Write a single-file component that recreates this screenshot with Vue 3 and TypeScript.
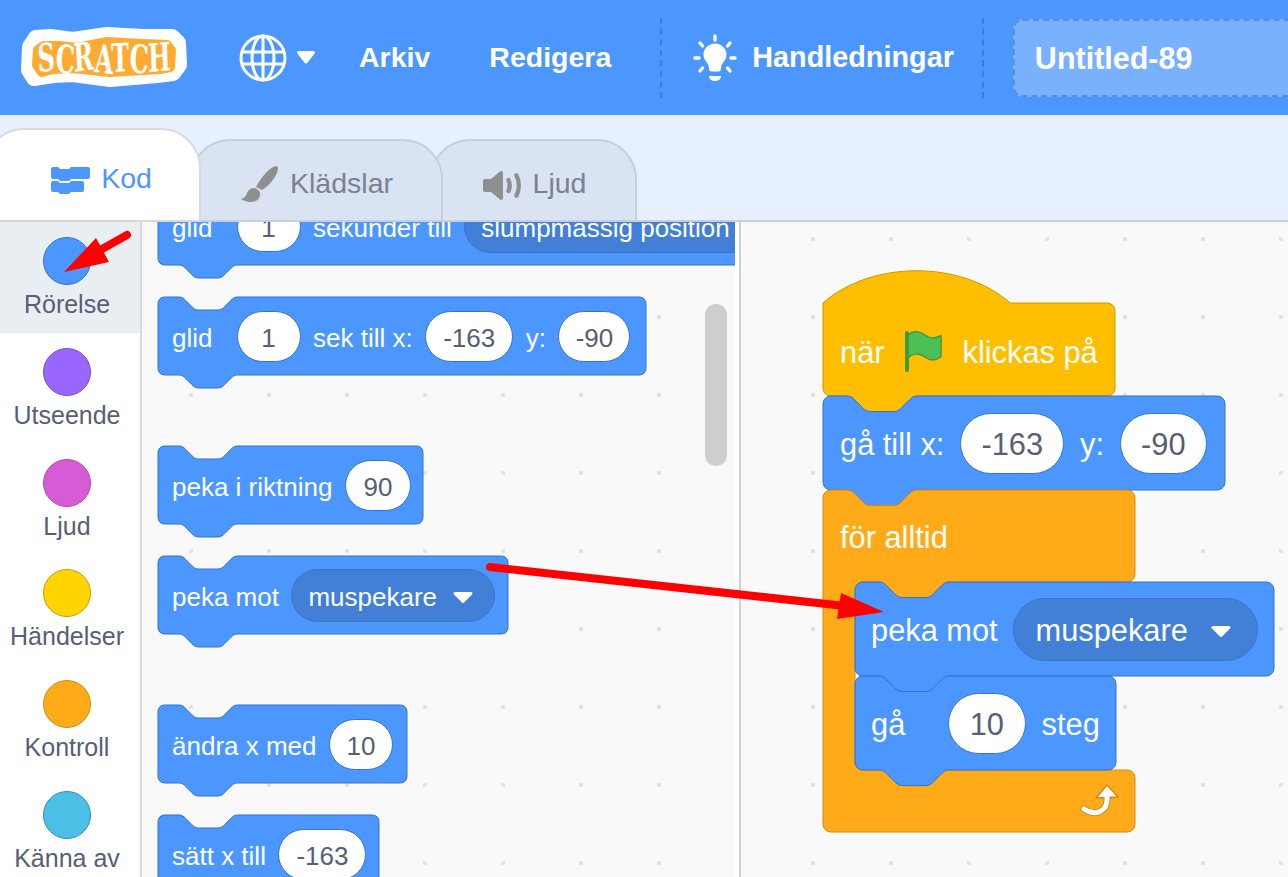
<script setup lang="ts">
type Part =
  | { kind: 'text'; label: string; width?: number }
  | { kind: 'num'; value: string; width: number }
  | { kind: 'menu'; label: string; width: number }
  | { kind: 'flag' }
  | { kind: 'loop' }

interface Block {
  shape: 'stack' | 'hat' | 'loop' | 'foot'
  width: number
  height: number
  gap?: number
  indent?: number
  parts: Part[]
}

interface Area {
  name: string
  scale: number
  notchAt: number
  blocks: Block[]
}

const text = (label: string, width?: number): Part => ({ kind: 'text', label, width })
const num = (value: string, width: number): Part => ({ kind: 'num', value, width })
const menu = (label: string, width: number): Part => ({ kind: 'menu', label, width })

const categories = [
  { label: 'Rörelse', fill: '#4c97ff', line: '#3373cc' },
  { label: 'Utseende', fill: '#9966ff', line: '#774dcb' },
  { label: 'Ljud', fill: '#d65cd6', line: '#bd42bd' },
  { label: 'Händelser', fill: '#ffd500', line: '#cc9900' },
  { label: 'Kontroll', fill: '#ffab19', line: '#cf8b17' },
  { label: 'Känna av', fill: '#4cbfe6', line: '#2e8eb8' },
]

const areas: Area[] = [
  {
    name: 'palette',
    scale: 1.625,
    notchAt: 21,
    blocks: [
      {
        shape: 'stack', width: 800, height: 78, gap: -35,
        parts: [text('glid', 52), num('1', 64), text('sekunder till'), menu('slumpmässig position', 320)],
      },
      {
        shape: 'stack', width: 488, height: 78, gap: 32,
        parts: [text('glid', 52), num('1', 64), text('sek till x:'), num('-163', 88), text('y:'), num('-90', 72)],
      },
      { shape: 'stack', width: 265, height: 78, gap: 71, parts: [text('peka i riktning'), num('90', 66)] },
      { shape: 'stack', width: 350, height: 78, gap: 32, parts: [text('peka mot'), menu('muspekare', 204)] },
      { shape: 'stack', width: 249, height: 78, gap: 71, parts: [text('ändra x med'), num('10', 64)] },
      { shape: 'stack', width: 221, height: 78, gap: 32, parts: [text('sätt x till'), num('-163', 88)] },
    ],
  },
  {
    name: 'workspace',
    scale: 1.95,
    notchAt: 24,
    blocks: [
      { shape: 'hat', width: 292, height: 126, parts: [text('när'), { kind: 'flag' }, text('klickas på')] },
      { shape: 'stack', width: 402, height: 94, parts: [text('gå till x:'), num('-163', 104), text('y:'), num('-90', 87)] },
      { shape: 'loop', width: 312, height: 92, parts: [text('för alltid')] },
      { shape: 'stack', width: 419, height: 94, indent: 32, parts: [text('peka mot'), menu('muspekare', 245)] },
      { shape: 'stack', width: 261, height: 94, indent: 32, parts: [text('gå', 61), num('10', 78), text('steg')] },
      { shape: 'foot', width: 312, height: 62, parts: [{ kind: 'loop' }] },
    ],
  },
]

function notchRight(s: number): string {
  return `c${2 * s},0 ${3 * s},${s} ${4 * s},${2 * s} l${4 * s},${4 * s} c${s},${s} ${2 * s},${2 * s} ${4 * s},${2 * s} h${12 * s} c${2 * s},0 ${3 * s},${-s} ${4 * s},${-2 * s} l${4 * s},${-4 * s} c${s},${-s} ${2 * s},${-2 * s} ${4 * s},${-2 * s}`
}

function notchLeft(s: number): string {
  return `c${-2 * s},0 ${-3 * s},${s} ${-4 * s},${2 * s} l${-4 * s},${4 * s} c${-s},${s} ${-2 * s},${2 * s} ${-4 * s},${2 * s} h${-12 * s} c${-2 * s},0 ${-3 * s},${-s} ${-4 * s},${-2 * s} l${-4 * s},${-4 * s} c${-s},${-s} ${-2 * s},${-2 * s} ${-4 * s},${-2 * s}`
}

// Block outlines follow the Scratch notch; they are drawn behind the fields.
function blockPath(block: Block, area: Area): string {
  const s = area.scale
  const r = 4 * s
  const a = area.notchAt
  const w = block.width
  const h = block.height
  const arc = (x: number, y: number, sweep = 1) => `A${r},${r} 0 0 ${sweep} ${x},${y}`
  const bottom = `V${h - r} ${arc(w - r, h)} H${a + 36 * s} ${notchLeft(s)} H${r} ${arc(0, h - r)} Z`

  if (block.shape === 'hat') {
    const top = 33
    return `M0,${top} c${25 * s},-43 ${71 * s},-43 ${96 * s},0 H${w - r} ${arc(w, top + r)} ${bottom}`
  }
  if (block.shape === 'loop') {
    const inner = 32
    const innerEnd = h + 94 + 94
    const end = innerEnd + 62
    return `M0,${r} ${arc(r, 0)} H${a} ${notchRight(s)} H${w - r} ${arc(w, r)} V${h - r} ${arc(w - r, h)} H${inner + a + 36 * s} ${notchLeft(s)} H${inner + r} ${arc(inner, h + r, 0)} V${innerEnd - r} ${arc(inner + r, innerEnd, 0)} H${w - r} ${arc(w, innerEnd + r)} V${end - r} ${arc(w - r, end)} H${r} ${arc(0, end - r)} Z`
  }
  return `M0,${r} ${arc(r, 0)} H${a} ${notchRight(s)} H${w - r} ${arc(w, r)} ${bottom}`
}

function blockTone(block: Block): string {
  if (block.shape === 'hat') return 'tone-event'
  if (block.shape === 'loop') return 'tone-control'
  return 'tone-motion'
}
</script>

<template>
  <div class="editor">
    <header class="menu-bar">
      <svg class="logo" viewBox="0 0 190 85" aria-label="Scratch">
        <path
          d="M20 32 26 23 40 22 63 25 97 20 133 22 162 22 168 28 169 50 163 58 147 60 100 64 63 59 43 60 24 63 19 55z"
          fill="#fff"
          stroke="#fff"
          stroke-width="16"
          stroke-linejoin="round"
        />
        <path
          d="M28 35 34 31 50 31 67 33 97 27 133 29 157 30 161 35 160 52 150 54 100 57 63 53 43 54 32 57 27 50z"
          fill="#ffab33"
          stroke="#ffab33"
          stroke-width="10"
          stroke-linejoin="round"
        />
        <text
          x="28"
          y="57"
          fill="#fff"
          textLength="133"
          lengthAdjust="spacingAndGlyphs"
          rotate="-3 4 -5 4 -2 3 -3"
        >SCRATCH</text>
      </svg>

      <svg class="globe" viewBox="0 0 48 48" fill="none" stroke="#fff" stroke-width="3">
        <circle cx="24" cy="24" r="22" />
        <ellipse cx="24" cy="24" rx="11" ry="22" />
        <path d="M24 2v44M3.500 18h41M3.500 30h41" />
      </svg>
      <svg class="globe-caret" viewBox="0 0 20 13">
        <path d="M2.500 1.500h15L10 11z" fill="#fff" stroke="#fff" stroke-width="3" stroke-linejoin="round" />
      </svg>

      <span class="menu-item first">Arkiv</span>
      <span class="menu-item second">Redigera</span>
      <span class="divider first-divider"></span>

      <svg class="bulb" viewBox="0 0 44 48" aria-hidden="true">
        <path
          d="M22 9.500c-6.500 0-11.500 5-11.500 11 0 4 2 6.500 3.800 8.700 1.200 1.500 1.500 3 1.700 5.300 0 2 1 3 2.500 3h7c1.500 0 2.500-1 2.500-3 .2-2.300.5-3.800 1.700-5.300 1.800-2.200 3.800-4.700 3.800-8.700 0-6-5-11-11.500-11z"
          fill="#fff"
        />
        <path d="M16 42h12c0 3-2.500 5-6 5s-6-2-6-5z" fill="#fff" />
        <path
          d="M22 2v4M7 9l2.500 3M37 9l-2.500 3M2 24h4M38 24h4M7 37l2.500-3M37 37l-2.500-3"
          stroke="#fff"
          stroke-width="3.400"
          stroke-linecap="round"
        />
      </svg>
      <span class="menu-item tutorials">Handledningar</span>
      <span class="divider second-divider"></span>

      <div class="project-title">Untitled-89</div>
    </header>

    <nav class="tabs">
      <div class="tab active">
        <svg class="tab-icon code-icon" viewBox="0 0 39 27">
          <path
            d="M2 0h5l2 2h9l2-2h17a2 2 0 0 1 2 2v8a2 2 0 0 1-2 2H20l-2 2H9l-2-2H2a2 2 0 0 1-2-2V2a2 2 0 0 1 2-2zM2 14h5l2 2h9l2-2h11a2 2 0 0 1 2 2v7a2 2 0 0 1-2 2H20l-2 2H9l-2-2H2a2 2 0 0 1-2-2v-7a2 2 0 0 1 2-2z"
            fill="#4c97ff"
          />
        </svg>
        Kod
      </div>
      <div class="tab costumes">
        <svg class="tab-icon" viewBox="0 0 40 40">
          <path d="M36 2c-6 1-14 10-20 21l6 3c8-5 16-15 16-22 0-1-1-2-2-2z" fill="#8f8f8f" />
          <path d="M14 24c5 1 8 5 5 10-3 5-12 5-18 1 4-1 5-3 6-6 1-3 4-5 7-5z" fill="#8f8f8f" />
        </svg>
        Klädslar
      </div>
      <div class="tab sounds">
        <svg class="tab-icon speaker" viewBox="0 0 38 29">
          <path
            d="M2 8h6l9-7.500c1.500-1 3-.2 3 1.500v25c0 1.700-1.500 2.500-3 1.500L8 21H2c-1 0-2-1-2-2v-9c0-1 1-2 2-2z"
            fill="#8f8f8f"
          />
          <path
            d="M25.500 9c1.500 3.500 1.500 7.500 0 11M33.500 4.500c3 6 3 14 0 20"
            fill="none"
            stroke="#8f8f8f"
            stroke-width="4.400"
            stroke-linecap="round"
          />
        </svg>
        Ljud
      </div>
    </nav>

    <main class="main">
      <aside class="categories">
        <div
          v-for="(cat, index) in categories"
          :key="cat.label"
          class="category"
          :class="{ selected: index === 0 }"
        >
          <span class="bubble" :style="{ background: cat.fill, borderColor: cat.line }"></span>
          <span class="category-label">{{ cat.label }}</span>
        </div>
      </aside>

      <section v-for="area in areas" :key="area.name" class="area" :class="area.name">
        <div
          v-for="(block, index) in area.blocks"
          :key="index"
          class="block"
          :class="['shape-' + block.shape, { nested: block.indent }]"
          :style="{
            width: block.width + 'px',
            height: block.height + 'px',
            marginTop: (block.gap ?? 0) + 'px',
            marginLeft: (block.indent ?? 0) + 'px',
          }"
        >
          <svg
            v-if="block.shape !== 'foot'"
            class="block-shape"
            :class="blockTone(block)"
            :width="block.width"
            :height="block.height"
          >
            <path :d="blockPath(block, area)" />
          </svg>

          <template v-for="(part, i) in block.parts" :key="i">
            <span
              v-if="part.kind === 'text'"
              class="label"
              :style="part.width ? { width: part.width + 'px' } : undefined"
            >{{ part.label }}</span>
            <span v-else-if="part.kind === 'num'" class="field" :style="{ width: part.width + 'px' }">{{ part.value }}</span>
            <span v-else-if="part.kind === 'menu'" class="dropdown" :style="{ width: part.width + 'px' }">
              {{ part.label }}
              <svg class="dropdown-caret" viewBox="0 0 20 11">
                <path d="M2 1.500h16L10 9.500z" fill="#fff" stroke="#fff" stroke-width="3" stroke-linejoin="round" />
              </svg>
            </span>
            <svg v-else-if="part.kind === 'flag'" class="flag" viewBox="0 0 40 42">
              <path
                d="M4 5C9 .5 16 1 21 5c5 4 10 4 16 .5V27c-6 4-11 4-16 0-5-4-12-4-17 1z"
                fill="#4cbf56"
                stroke="#45993d"
                stroke-width="1.500"
                stroke-linejoin="round"
              />
              <path d="M3 3v37" stroke="#45993d" stroke-width="4" stroke-linecap="round" />
            </svg>
            <svg v-else class="loop-arrow" viewBox="0 0 40 36">
              <path d="M4 26c10 7 24 4 23-12" fill="none" stroke="#cf8b17" stroke-width="7" stroke-linecap="round" />
              <path d="M16 15 27 2l11 12z" fill="#fff" stroke="#cf8b17" stroke-width="1.500" stroke-linejoin="round" />
              <path d="M4 26c10 7 24 4 23-12" fill="none" stroke="#fff" stroke-width="5" stroke-linecap="round" />
            </svg>
          </template>
        </div>
      </section>

      <div class="scrollbar"></div>
    </main>

    <svg class="callouts" width="1288" height="877" aria-hidden="true">
      <path d="M127 235 95 253M490 567l355 39" stroke="#ff0000" stroke-width="8" stroke-linecap="round" />
      <path d="M64 272 96 238l13 24zM884 612 841 593l-4 26z" fill="#ff0000" />
    </svg>
  </div>
</template>

<style>
html,
body {
  margin: 0;
  overflow: hidden;
}
</style>

<style scoped>
.editor {
  position: relative;
  width: 1288px;
  height: 877px;
  overflow: hidden;
  font-family: 'Liberation Sans', Arial, sans-serif;
  background: #fff;
}

.menu-bar {
  display: flex;
  align-items: center;
  height: 115px;
  overflow: hidden;
  background: #4c97ff;
  color: #fff;
}

.logo {
  flex: none;
  width: 190px;
  height: 85px;
  margin: 0 0 0 10px;
  font-family: 'DejaVu Serif', 'Liberation Serif', serif;
  font-size: 39px;
  font-weight: 700;
}

.globe {
  flex: none;
  width: 48px;
  height: 48px;
  margin-left: 39px;
}

.globe-caret {
  flex: none;
  width: 20px;
  height: 13px;
  margin-left: 9px;
}

.menu-item {
  flex: none;
  font-size: 28.5px;
  font-weight: 700;
}

.menu-item.first {
  margin-left: 43px;
}

.menu-item.second {
  margin-left: 59px;
}

.divider {
  flex: none;
  width: 0;
  height: 80px;
  border-left: 2px dashed rgba(0, 0, 0, 0.18);
}

.first-divider {
  margin-left: 49px;
}

.bulb {
  flex: none;
  width: 44px;
  height: 48px;
  margin-left: 31px;
}

.menu-item.tutorials {
  margin-left: 15px;
  font-size: 28.800px;
}

.second-divider {
  margin-left: 28px;
}

.project-title {
  flex: none;
  box-sizing: border-box;
  width: 320px;
  height: 78px;
  margin-left: 29px;
  padding-left: 20px;
  border: 2px dashed rgba(0, 0, 0, 0.2);
  border-radius: 10px;
  background: rgba(255, 255, 255, 0.25);
  font-size: 30.500px;
  font-weight: 700;
  line-height: 74px;
}

.tabs {
  display: flex;
  align-items: flex-end;
  box-sizing: border-box;
  height: 107px;
  border-bottom: 2px solid #c5cfdf;
  background: #e6f0ff;
}

.tab {
  position: relative;
  display: flex;
  align-items: center;
  justify-content: center;
  box-sizing: border-box;
  height: 83px;
  margin-bottom: -2px;
  padding-top: 6px;
  border: 2px solid #c5cfdf;
  border-radius: 40px 40px 0 0;
  background: #d9e3f2;
  color: #7c8095;
  font-size: 28.500px;
}

.tab.active {
  z-index: 3;
  width: 217px;
  height: 94px;
  margin-left: -16px;
  padding-left: 18px;
  border-color: #d9d9d9;
  background: #fff;
  color: #4c97ff;
}

.tab.costumes {
  z-index: 2;
  width: 253px;
  margin-left: -11px;
}

.tab.sounds {
  z-index: 1;
  width: 207px;
  margin-left: -13px;
  padding-left: 2px;
}

.tab-icon {
  flex: none;
  width: 40px;
  height: 40px;
  margin-right: 10px;
}

.code-icon {
  width: 39px;
  height: 27px;
  margin-top: 4px;
  margin-right: 11px;
}

.speaker {
  width: 38px;
  height: 29px;
  margin-top: 4px;
  margin-right: 12px;
}

.main {
  position: relative;
  display: flex;
  height: 655px;
  background: #fff;
}

.categories {
  flex: none;
  width: 140px;
  border-right: 2px solid #d9d9d9;
  color: #575e75;
}

.category {
  display: flex;
  flex-direction: column;
  align-items: center;
  height: 110.800px;
  padding: 15px 6px 0 0;
  box-sizing: border-box;
}

.category.selected {
  background: #e9eef2;
}

.bubble {
  flex: none;
  box-sizing: border-box;
  width: 48px;
  height: 48px;
  border: 1.500px solid;
  border-radius: 50%;
}

.category-label {
  margin-top: 3px;
  font-size: 25px;
  line-height: 32px;
  white-space: nowrap;
}

.area {
  overflow: hidden;
  background-color: #f9f9f9;
  background-image: radial-gradient(circle, #e2e2e2 0, #e2e2e2 2px, transparent 2.500px);
  background-size: 78px 78px;
}

.palette {
  flex: none;
  box-sizing: border-box;
  width: 593px;
  padding-left: 16px;
  background-position: 10px -22px;
  font-size: 26px;
  --gap: 12.500px;
  --pad: 14px;
  --field-h: 51px;
  --menu-h: 53px;
}

.workspace {
  flex: 1;
  margin-left: 4px;
  padding: 48px 0 0 82px;
  border-left: 2px solid #d0d0d0;
  background-position: 33px -22px;
  font-size: 30.800px;
  --gap: 15.800px;
  --pad: 17px;
  --field-h: 61px;
  --menu-h: 63px;
}

.block {
  position: relative;
  display: flex;
  align-items: center;
  gap: var(--gap);
  box-sizing: border-box;
  padding-left: var(--pad);
  color: #fff;
  white-space: nowrap;
}

.block.nested {
  padding-left: 16px;
}

.shape-hat {
  padding-top: 36px;
  gap: 19px;
}

.shape-foot {
  justify-content: flex-end;
  padding-right: 15px;
}

.block-shape {
  position: absolute;
  top: 0;
  left: 0;
  overflow: visible;
}

.tone-motion path {
  fill: #4c97ff;
  stroke: #3373cc;
}

.tone-event path {
  fill: #ffbf00;
  stroke: #cc9900;
}

.tone-control path {
  fill: #ffab19;
  stroke: #cf8b17;
}

.label,
.field,
.dropdown,
.flag,
.loop-arrow {
  position: relative;
  flex: none;
}

.label {
  padding-top: 4px;
}

.field {
  display: flex;
  align-items: center;
  justify-content: center;
  box-sizing: border-box;
  height: var(--field-h);
  padding-top: 4px;
  border: 1.500px solid #3373cc;
  border-radius: 999px;
  background: #fff;
  color: #575e75;
}

.dropdown {
  display: flex;
  align-items: center;
  justify-content: space-between;
  box-sizing: border-box;
  height: var(--menu-h);
  padding: 4px 21px 0 16px;
  border: 1.500px solid #3b74c8;
  border-radius: 999px;
  background: #4280d7;
}

.workspace .dropdown {
  padding: 4px 26px 0 21px;
}

.dropdown-caret {
  flex: none;
  width: 20px;
  height: 11px;
}

.flag {
  width: 40px;
  height: 42px;
}

.loop-arrow {
  width: 40px;
  height: 36px;
}

.scrollbar {
  position: absolute;
  top: 82px;
  left: 705px;
  width: 22px;
  height: 162px;
  border-radius: 11px;
  background: #cecece;
}

.callouts {
  position: absolute;
  top: 0;
  left: 0;
  pointer-events: none;
}
</style>
